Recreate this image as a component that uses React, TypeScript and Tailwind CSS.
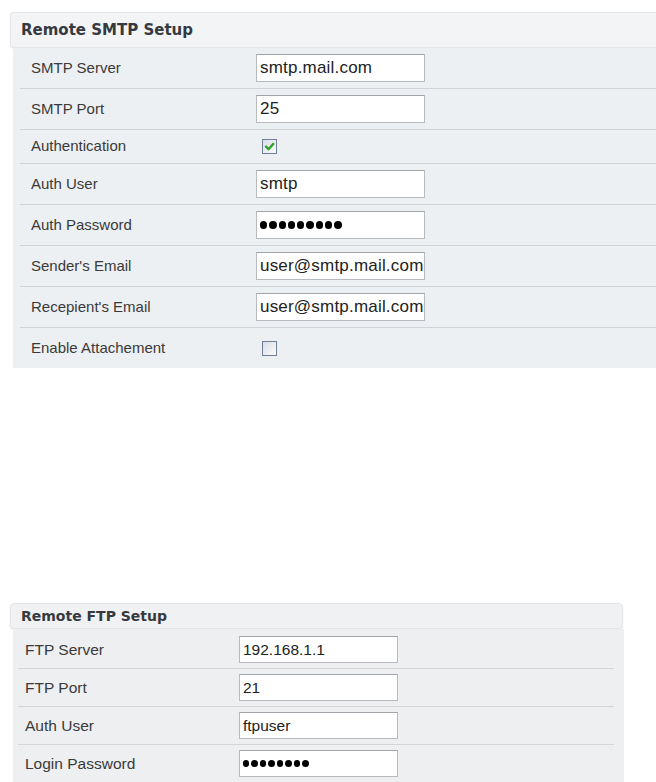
import React from "react"

type Row =
  | { label: string; kind: "text"; value: string }
  | { label: string; kind: "password"; dots: number }
  | { label: string; kind: "check"; checked: boolean }

const smtpRows: Row[] = [
  { label: "SMTP Server", kind: "text", value: "smtp.mail.com" },
  { label: "SMTP Port", kind: "text", value: "25" },
  { label: "Authentication", kind: "check", checked: true },
  { label: "Auth User", kind: "text", value: "smtp" },
  { label: "Auth Password", kind: "password", dots: 9 },
  { label: "Sender's Email", kind: "text", value: "user@smtp.mail.com" },
  { label: "Recepient's Email", kind: "text", value: "user@smtp.mail.com" },
  { label: "Enable Attachement", kind: "check", checked: false },
]

const ftpRows: Row[] = [
  { label: "FTP Server", kind: "text", value: "192.168.1.1" },
  { label: "FTP Port", kind: "text", value: "21" },
  { label: "Auth User", kind: "text", value: "ftpuser" },
  { label: "Login Password", kind: "password", dots: 8 },
]

function Checkbox({ checked }: { checked: boolean }) {
  return (
    <div className="w-[15px] h-[15px] border border-[#6f7f98] bg-gradient-to-br from-[#d9dee4] to-[#fbfbfc] flex items-center justify-center">
      {checked && (
        <svg width="11" height="11" viewBox="0 0 11 11">
          <path d="M2 5.6 L4.5 8.2 L9.3 2.9" fill="none" stroke="#2fa22d" strokeWidth="2.4" strokeLinecap="round" strokeLinejoin="round" />
        </svg>
      )}
    </div>
  )
}

function Field({ row, small }: { row: Row; small?: boolean }) {
  if (row.kind === "check") {
    return (
      <div className="pl-[6px]">
        <Checkbox checked={row.checked} />
      </div>
    )
  }
  const box = small
    ? "w-[159px] h-[27px] text-[15.5px]"
    : "w-[169px] h-[28px] text-[17px] tracking-[0.2px]"
  return (
    <div
      className={`${box} flex items-center pl-[3px] bg-white border border-[#b7babe] border-t-[#a1a5aa] text-[#222] overflow-hidden whitespace-nowrap font-['Liberation_Sans',Arial,sans-serif]`}
    >
      {row.kind === "text" ? (
        row.value
      ) : (
        <div className={`flex ${small ? "gap-[2.2px]" : "gap-[2px]"}`}>
          {Array.from({ length: row.dots }).map((_, i) => (
            <span key={i} className={`${small ? "w-[6.3px] h-[6.3px]" : "w-[7.3px] h-[7.3px]"} rounded-full bg-black`} />
          ))}
        </div>
      )}
    </div>
  )
}

export default function App() {
  return (
    <div className="min-h-screen bg-white pt-[12px] font-['Liberation_Sans',Arial,sans-serif]">
      {/* SMTP */}
      <section className="ml-[10px]">
        <div className="h-[36px] flex items-center pl-[10px] rounded-l-[4px] border border-r-0 border-[#e3e5e8] bg-[#f2f4f6] shadow-[0_1px_2px_rgba(0,0,0,0.06)]">
          <h2 className="text-[15px] font-bold text-[#363a40] font-['DejaVu_Sans',Verdana,sans-serif]">Remote SMTP Setup</h2>
        </div>
        <div className="ml-[3px] bg-[#edf0f3]">
          {smtpRows.map((row, i) => {
            const last = i === smtpRows.length - 1
            const h = last ? "h-[40px]" : row.kind === "check" ? "h-[34px]" : "h-[41px]"
            return (
              <div
                key={row.label}
                className={`ml-[7px] flex items-center ${h} ${last ? "" : "border-b border-[#d0d3d7]"}`}
              >
                <div className="w-[236px] pl-[11px] text-[15px] text-[#3a3a3a]">{row.label}</div>
                <Field row={row} />
              </div>
            )
          })}
        </div>
      </section>

      {/* FTP */}
      <section className="ml-[10px] mt-[235px] w-[614px]">
        <div className="w-[613px] h-[26px] flex items-center pl-[10px] rounded-[4px] border border-[#e3e5e8] bg-[#f0f1f3] shadow-[0_1px_2px_rgba(0,0,0,0.08)]">
          <h2 className="text-[14px] font-bold text-[#363a40] font-['DejaVu_Sans',Verdana,sans-serif]">Remote FTP Setup</h2>
        </div>
        <div className="ml-[3px] pr-[10px] pt-[2px] bg-[#eeeff1]">
          {ftpRows.map((row) => (
            <div key={row.label} className="ml-[5px] h-[38px] flex items-center border-b border-[#d3d5d8]">
              <div className="w-[221px] pl-[7px] text-[15.5px] text-[#3a3a3a]">{row.label}</div>
              <Field row={row} small />
            </div>
          ))}
        </div>
      </section>
    </div>
  )
}
